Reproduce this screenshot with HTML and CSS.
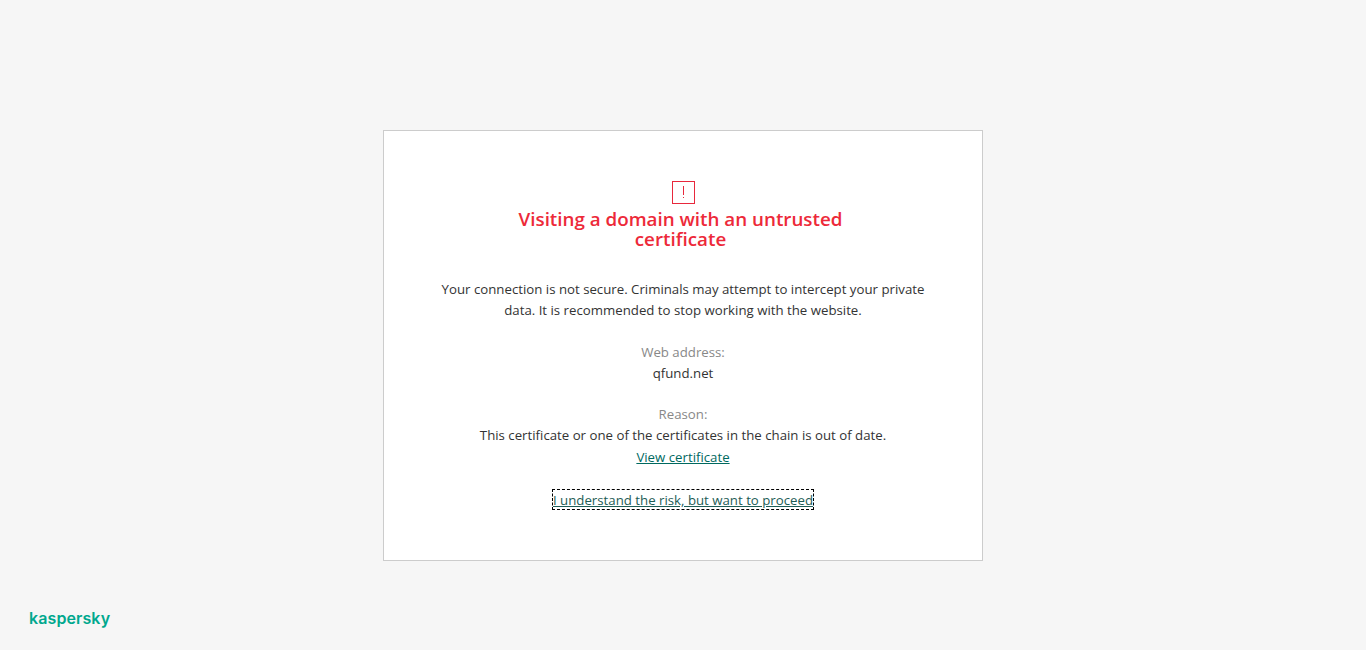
FILE: index.html
```html
<!DOCTYPE html>
<html lang="en">
<head>
<meta charset="utf-8">
<title>Untrusted certificate</title>
<link rel="stylesheet" href="styles.css">
</head>
<body>
<main class="card">
  <svg class="icon" width="23" height="23" viewBox="0 0 23 23" shape-rendering="crispEdges"><rect x=".5" y=".5" width="22" height="22" fill="none" stroke="#e8283c"/><path d="M11 5h1v9h-1zM11 16h1v1h-1z" fill="#e8283c"/></svg>
  <h1 class="title">Visiting a domain with an untrusted<br>certificate</h1>
  <p class="message">Your connection is not secure. Criminals may attempt to intercept your private<br>data. It is recommended to stop working with the website.</p>
  <dl class="details">
    <dt>Web address:</dt><dd>qfund.net</dd>
    <dt class="reason">Reason:</dt><dd>This certificate or one of the certificates in the chain is out of date.</dd>
  </dl>
  <a class="link" href="#">View certificate</a>
  <a class="link proceed" href="#">I understand the risk, but want to proceed</a>
</main>
<footer class="brand">kaspersky</footer>
</body>
</html>
```
FILE: styles.css
```css
*{box-sizing:border-box}
body{margin:0;height:650px;background:#f6f6f6;font:13.24px/21px "Open Sans",sans-serif;color:#333;overflow:hidden;display:flex;flex-direction:column;align-items:center;padding-top:130px}
.card{width:600px;height:431px;background:#fff;border:1px solid #ccc;display:flex;flex-direction:column;align-items:center;padding-top:50px;flex:none;white-space:nowrap}
.icon{display:block;flex:none}
.title{margin:5px 5px 0 0;color:#ed2939;font-size:18.8px;line-height:20px;font-weight:600;text-align:center}
.message{margin:30px 0 0;text-align:center}
.details{margin:21px 0 0;text-align:center}
dt{color:#888}
dd{margin:0}
.reason{margin-top:20px}
.link{color:#00695f;margin-top:1px}
.proceed{margin-top:22px;padding-top:2px;line-height:17px;color:#1d5c55;outline:1px dashed #000}
.brand{align-self:flex-start;margin:46px 0 0 29px;color:#00a88e;font:600 16px/22px Inter,sans-serif;letter-spacing:.1px}
```
